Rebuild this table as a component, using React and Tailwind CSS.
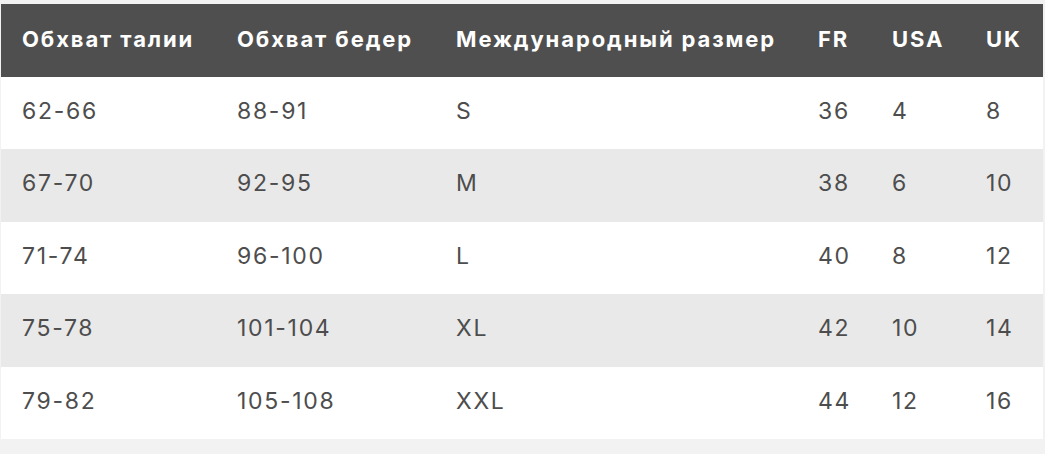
import React from "react";

const rows = [
  ["62-66", "88-91", "S", "36", "4", "8"],
  ["67-70", "92-95", "M", "38", "6", "10"],
  ["71-74", "96-100", "L", "40", "8", "12"],
  ["75-78", "101-104", "XL", "42", "10", "14"],
  ["79-82", "105-108", "XXL", "44", "12", "16"],
];
const heads = ["Обхват талии", "Обхват бедер", "Международный размер", "FR", "USA", "UK"];
const widths = ["w-[215px]", "w-[219px]", "w-[362px]", "w-[74px]", "w-[94px]", "w-[78px]"];

export default function App() {
  return (
    <div className="min-h-[454px] bg-[#f2f2f2] pt-[4px] pl-[1px] pr-[2px]" style={{ fontFamily: "Inter, 'Noto Sans', sans-serif" }}>
      <table className="w-[1042px] table-fixed border-collapse">
        <colgroup>
          {widths.map((w, i) => (
            <col key={i} className={w} />
          ))}
        </colgroup>
        <thead>
          <tr className="h-[73px] bg-[#4f4f4f]">
            {heads.map((h, i) => (
              <th key={i} className="pl-[21px] pb-[2px] text-left align-middle text-[22px] font-bold tracking-[1.9px] text-white whitespace-nowrap">
                {h}
              </th>
            ))}
          </tr>
        </thead>
        <tbody>
          {rows.map((r, ri) => (
            <tr key={ri} className={`h-[72.4px] ${ri % 2 === 0 ? "bg-white" : "bg-[#e9e9e9]"}`}>
              {r.map((c, ci) => (
                <td key={ci} className="pl-[21px] pb-[4px] text-left align-middle text-[23px] font-normal tracking-[1.7px] text-[#4d4d4d] whitespace-nowrap">
                  {c}
                </td>
              ))}
            </tr>
          ))}
        </tbody>
      </table>
    </div>
  );
}
